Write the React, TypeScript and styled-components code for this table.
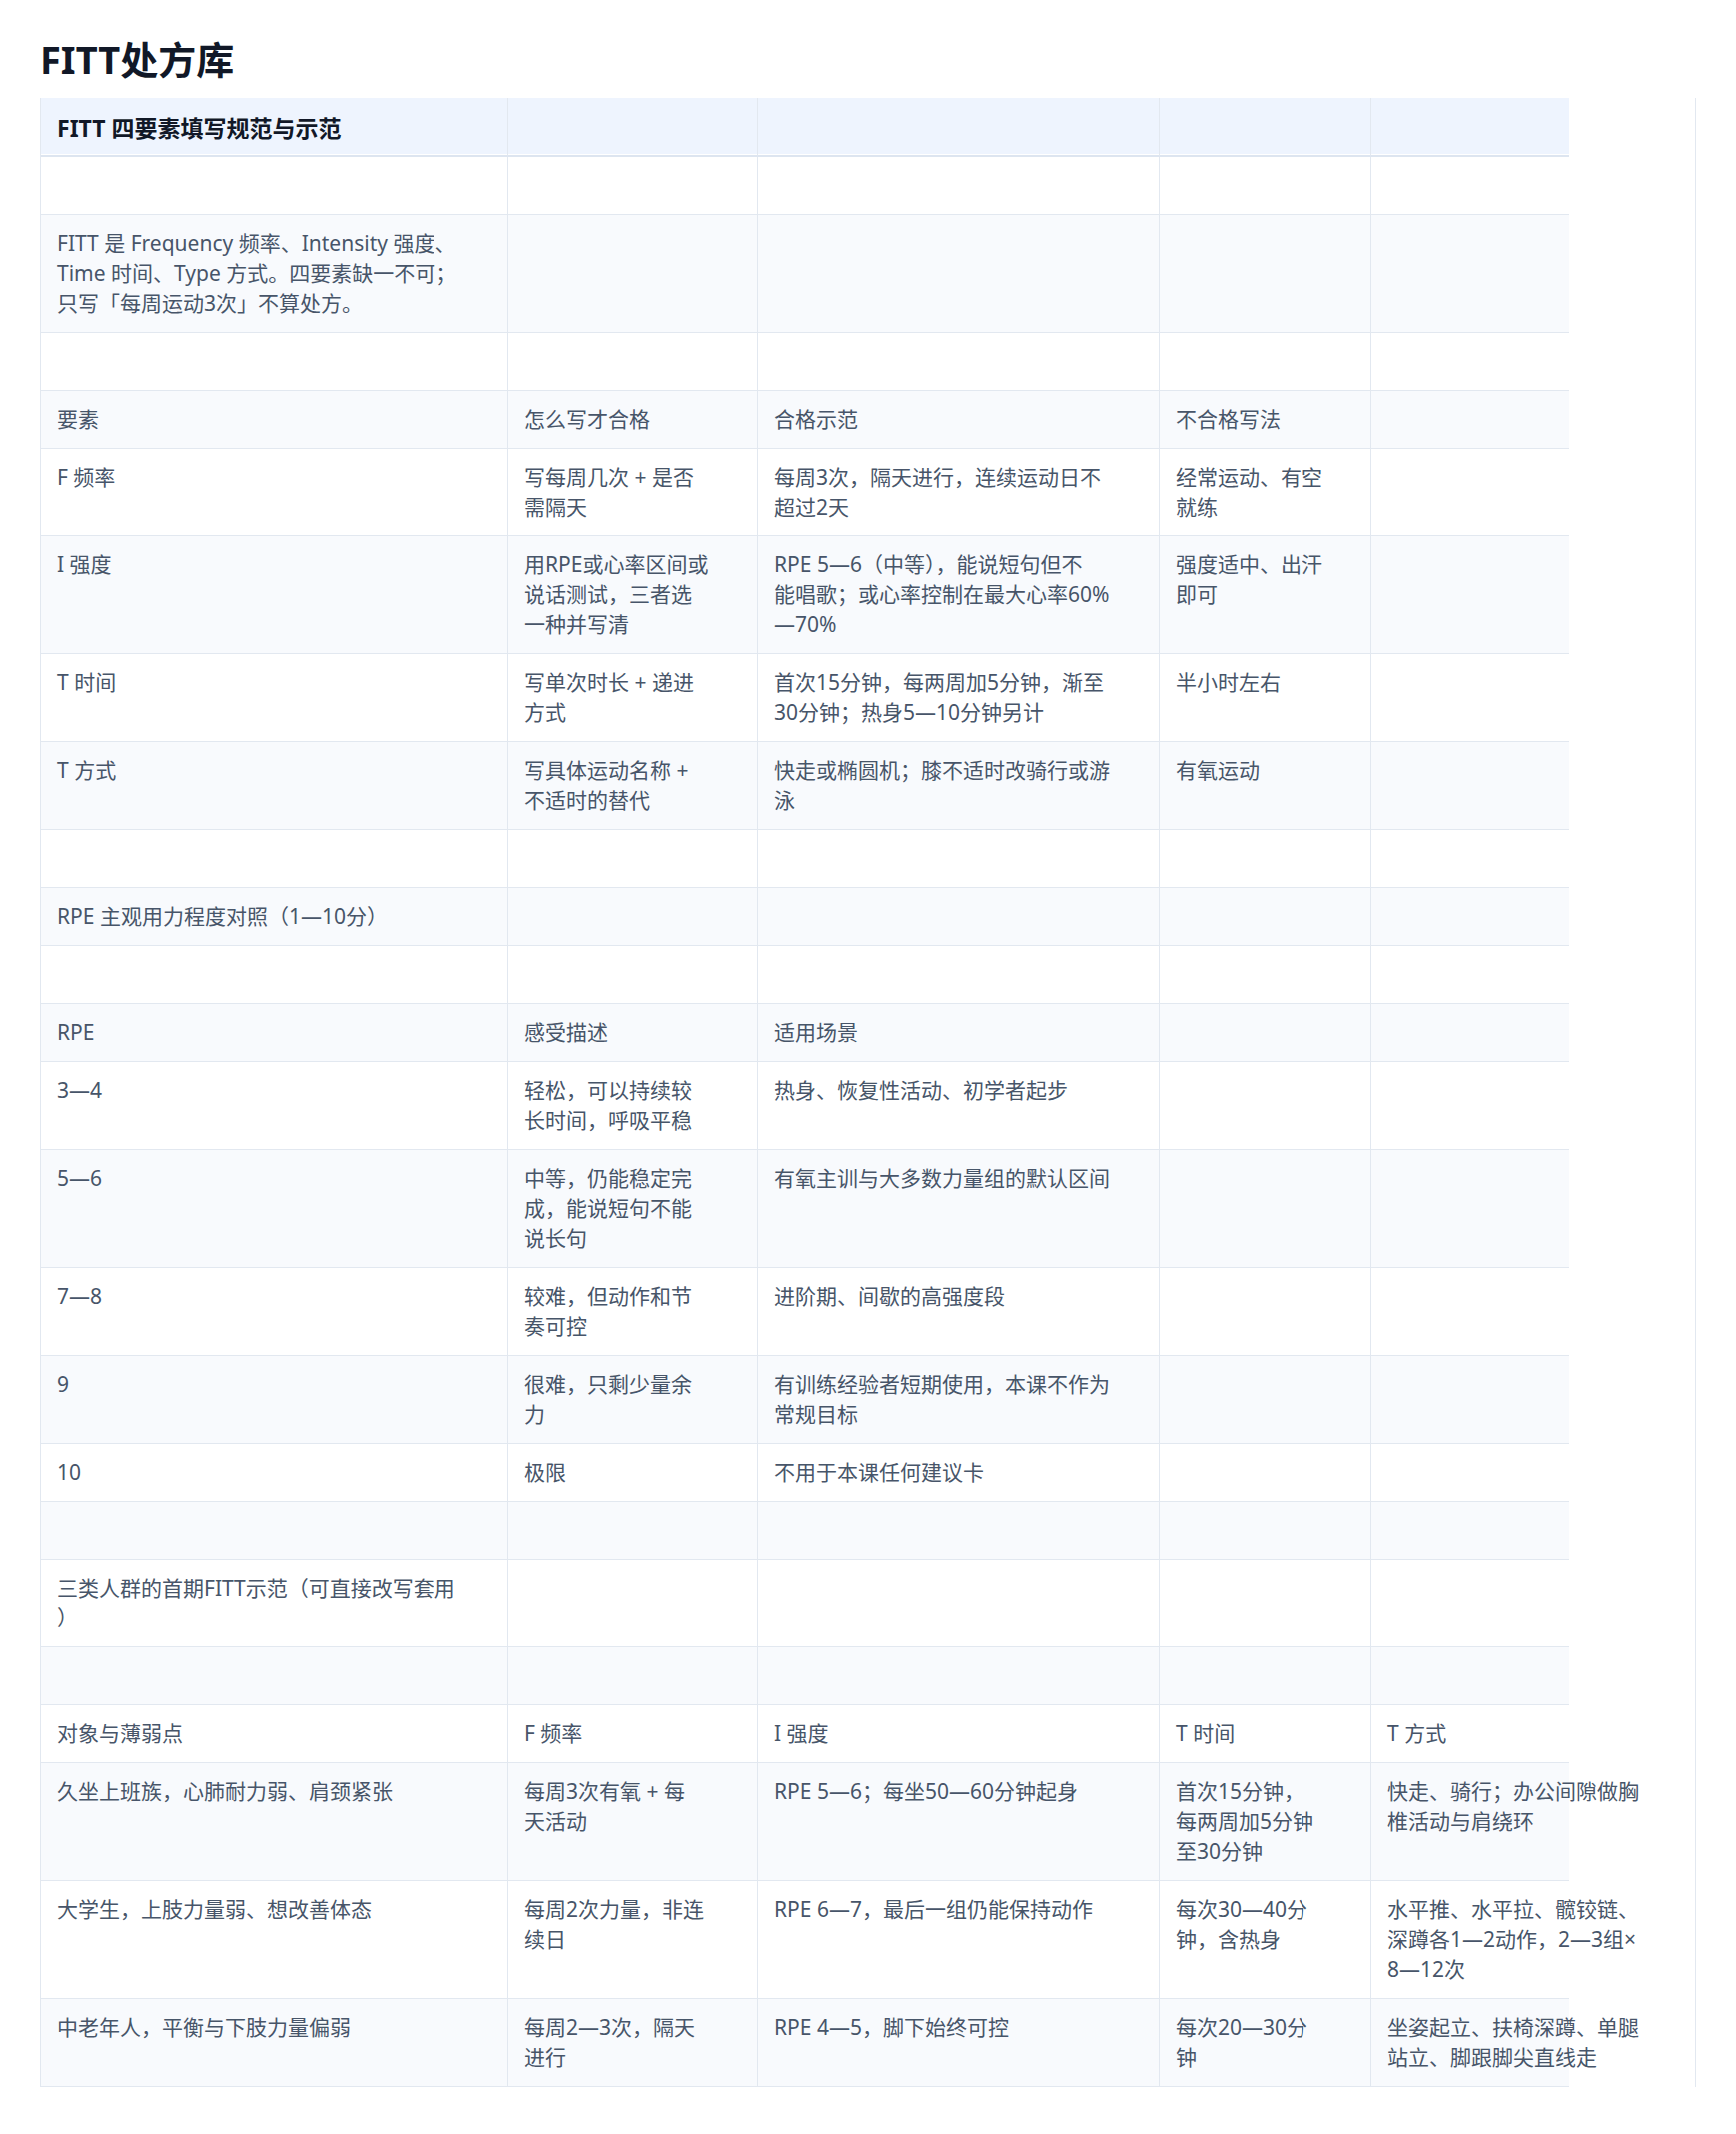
import React from 'react'
import styled, { createGlobalStyle } from 'styled-components'

const GlobalStyle = createGlobalStyle`
  html, body {
    margin: 0;
    background: #ffffff;
  }
  body {
    font-family: 'Noto Sans', 'Noto Sans CJK SC', sans-serif;
    color: #475569;
  }
`

const Page = styled.main`
  padding: 36px 40px 48px;
`

const Title = styled.h1`
  margin: 0 0 16px;
  font-size: 38px;
  line-height: 46px;
  font-weight: 700;
  color: #111827;
`

const Frame = styled.div`
  border-left: 1px solid #e2e8f0;
  border-right: 1px solid #e2e8f0;
`

const Table = styled.table`
  width: 1530px;
  table-layout: fixed;
  border-collapse: separate;
  border-spacing: 0;
`

const Col = styled.col<{ $w: number }>`
  width: ${({ $w }) => $w}px;
`

const HeadCell = styled.th`
  padding: 15px 16px 12px;
  text-align: left;
  vertical-align: top;
  font-size: 23px;
  line-height: 30px;
  font-weight: 700;
  color: #111827;
  white-space: pre;
  background: #eef4fe;
  border-right: 1px solid #e2e8f0;
  border-bottom: 2px solid #dde5f0;
  box-shadow: inset 0 -1px 0 #ffffff;

  &:last-child {
    border-right: 0;
  }
`

const Row = styled.tr`
  &:nth-child(even) {
    background: #f8fafd;
  }
`

const Cell = styled.td`
  padding: 13px 16px 14px;
  vertical-align: top;
  font-size: 21px;
  line-height: 30px;
  color: #475569;
  white-space: pre;
  border-right: 1px solid #e2e8f0;
  border-bottom: 1px solid #e2e8f0;

  &:last-child {
    border-right: 0;
  }
`

const widths = [468, 250, 402, 212, 198]

const head = ['FITT 四要素填写规范与示范', '', '', '', '']

const rows: string[][] = [
  ['', '', '', '', ''],
  [
    'FITT 是 Frequency 频率、Intensity 强度、\nTime 时间、Type 方式。四要素缺一不可；\n只写「每周运动3次」不算处方。',
    '', '', '', '',
  ],
  ['', '', '', '', ''],
  ['要素', '怎么写才合格', '合格示范', '不合格写法', ''],
  ['F 频率', '写每周几次 + 是否\n需隔天', '每周3次，隔天进行，连续运动日不\n超过2天', '经常运动、有空\n就练', ''],
  [
    'I 强度',
    '用RPE或心率区间或\n说话测试，三者选\n一种并写清',
    'RPE 5—6（中等），能说短句但不\n能唱歌；或心率控制在最大心率60%\n—70%',
    '强度适中、出汗\n即可',
    '',
  ],
  ['T 时间', '写单次时长 + 递进\n方式', '首次15分钟，每两周加5分钟，渐至\n30分钟；热身5—10分钟另计', '半小时左右', ''],
  ['T 方式', '写具体运动名称 +\n不适时的替代', '快走或椭圆机；膝不适时改骑行或游\n泳', '有氧运动', ''],
  ['', '', '', '', ''],
  ['RPE 主观用力程度对照（1—10分）', '', '', '', ''],
  ['', '', '', '', ''],
  ['RPE', '感受描述', '适用场景', '', ''],
  ['3—4', '轻松，可以持续较\n长时间，呼吸平稳', '热身、恢复性活动、初学者起步', '', ''],
  ['5—6', '中等，仍能稳定完\n成，能说短句不能\n说长句', '有氧主训与大多数力量组的默认区间', '', ''],
  ['7—8', '较难，但动作和节\n奏可控', '进阶期、间歇的高强度段', '', ''],
  ['9', '很难，只剩少量余\n力', '有训练经验者短期使用，本课不作为\n常规目标', '', ''],
  ['10', '极限', '不用于本课任何建议卡', '', ''],
  ['', '', '', '', ''],
  ['三类人群的首期FITT示范（可直接改写套用\n）', '', '', '', ''],
  ['', '', '', '', ''],
  ['对象与薄弱点', 'F 频率', 'I 强度', 'T 时间', 'T 方式'],
  [
    '久坐上班族，心肺耐力弱、肩颈紧张',
    '每周3次有氧 + 每\n天活动',
    'RPE 5—6；每坐50—60分钟起身',
    '首次15分钟，\n每两周加5分钟\n至30分钟',
    '快走、骑行；办公间隙做胸\n椎活动与肩绕环',
  ],
  [
    '大学生，上肢力量弱、想改善体态',
    '每周2次力量，非连\n续日',
    'RPE 6—7，最后一组仍能保持动作',
    '每次30—40分\n钟，含热身',
    '水平推、水平拉、髋铰链、\n深蹲各1—2动作，2—3组×\n8—12次',
  ],
  [
    '中老年人，平衡与下肢力量偏弱',
    '每周2—3次，隔天\n进行',
    'RPE 4—5，脚下始终可控',
    '每次20—30分\n钟',
    '坐姿起立、扶椅深蹲、单腿\n站立、脚跟脚尖直线走',
  ],
]

export default function App() {
  return (
    <>
      <GlobalStyle />
      <Page>
        <Title>FITT处方库</Title>
        <Frame>
          <Table>
            <colgroup>
              {widths.map((w, i) => (
                <Col key={i} $w={w} />
              ))}
            </colgroup>
            <thead>
              <tr>
                {head.map((h, i) => (
                  <HeadCell key={i}>{h || '\u00a0'}</HeadCell>
                ))}
              </tr>
            </thead>
            <tbody>
              {rows.map((row, r) => (
                <Row key={r}>
                  {row.map((text, c) => (
                    <Cell key={c}>{text || '\u00a0'}</Cell>
                  ))}
                </Row>
              ))}
            </tbody>
          </Table>
        </Frame>
      </Page>
    </>
  )
}
